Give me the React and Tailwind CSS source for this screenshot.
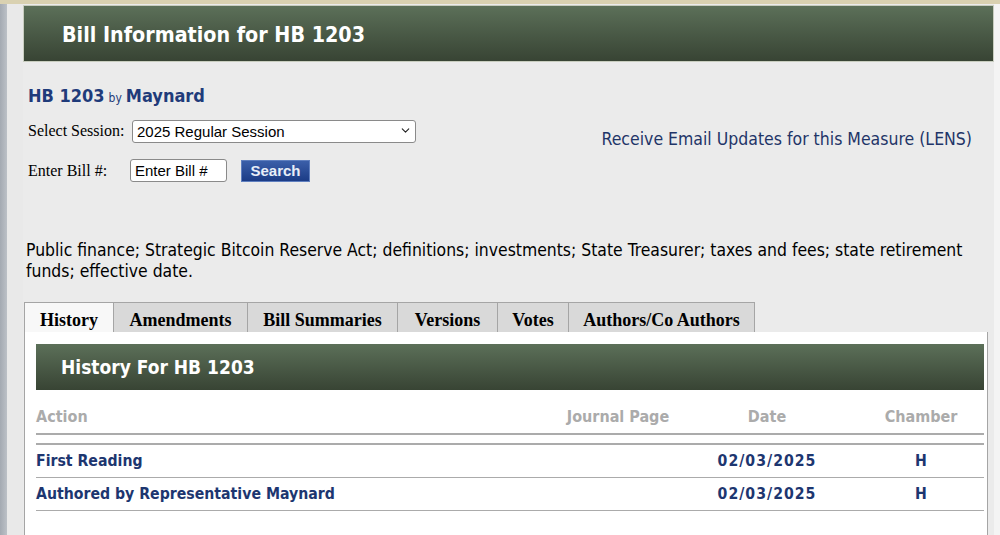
import { ChevronDown } from "lucide-react";

const tah = { fontFamily: '"DejaVu Sans Condensed", "DejaVu Sans", sans-serif' };

const tabs = ["History", "Amendments", "Bill Summaries", "Versions", "Votes", "Authors/Co Authors"];
const tabWidths = ["w-[89px]", "w-[134px]", "w-[150px]", "w-[100px]", "w-[71px]", "w-[187px]"];

const rows = [
  { action: "First Reading", page: "", date: "02/03/2025", chamber: "H" },
  { action: "Authored by Representative Maynard", page: "", date: "02/03/2025", chamber: "H" },
];

export default function App() {
  return (
    <div className="w-[1000px] h-[535px] overflow-hidden bg-[#ebebeb] flex flex-col">
      <div className="h-[4px] bg-[#d9d1b1] shrink-0" />
      <div className="flex flex-1 min-h-0">
        <div className="w-[7px] bg-gradient-to-r from-[#a4aab2] to-[#bcc1c7] shrink-0" />
        <div className="w-[16px] bg-[#e9e9e9] shrink-0" />

        <main className="w-[971px] shrink-0 flex flex-col">
          <header
            className="mt-[1px] h-[57px] flex items-center pl-[38px] pt-[2px] bg-gradient-to-b from-[#5c7059] to-[#384434] border border-[#c8cdbf]"
            style={tah}
          >
            <h1 className="text-[21.3px] font-bold text-white">Bill Information for HB 1203</h1>
          </header>

          <section className="flex justify-between pl-[5px] pr-[22px]">
            <div className="flex flex-col">
              <div className="mt-[20px] h-[22px] flex items-baseline text-[#1f3b7a] font-bold" style={tah}>
                <span className="text-[18px]">HB 1203</span>
                <span className="text-[12px] font-normal mx-[4px]">by</span>
                <span className="text-[18px]">Maynard</span>
              </div>

              <div className="mt-[15px] flex items-center h-[23px]">
                <span className="text-[16px] text-black w-[104px]" style={{ fontFamily: '"Liberation Serif", serif' }}>
                  Select Session:
                </span>
                <div className="relative">
                  <select
                    className="appearance-none w-[284px] h-[23px] bg-white border border-[#8a8a8a] rounded-[3px] pl-[4px] text-[15px] text-black"
                    style={{ fontFamily: '"Liberation Sans", Arial, sans-serif' }}
                    defaultValue="2025"
                  >
                    <option value="2025">2025 Regular Session</option>
                  </select>
                  <ChevronDown className="absolute right-[4px] top-[5px] w-[13px] h-[13px] text-[#222]" strokeWidth={2} />
                </div>
              </div>

              <div className="mt-[17px] flex items-center h-[23px]">
                <span className="text-[16px] text-black w-[102px]" style={{ fontFamily: '"Liberation Serif", serif' }}>
                  Enter Bill #:
                </span>
                <input
                  className="w-[97px] h-[23px] bg-white border border-[#8a8a8a] rounded-[3px] px-[4px] text-[15px] placeholder:text-black"
                  style={{ fontFamily: '"Liberation Sans", Arial, sans-serif' }}
                  placeholder="Enter Bill #"
                />
                <button
                  className="ml-[14px] w-[69px] h-[22px] bg-gradient-to-b from-[#3b5fa9] to-[#1c3c86] border border-[#5f7fbf] text-[#e8eef8] font-bold text-[15px] leading-none"
                  style={{ fontFamily: '"Liberation Sans", Arial, sans-serif' }}
                >
                  Search
                </button>
              </div>
            </div>

            <a className="mt-[64px] text-[17.5px] text-[#1f3568] self-start" style={tah}>
              Receive Email Updates for this Measure (LENS)
            </a>
          </section>

          <p className="mt-[58px] pl-[3px] pr-[18px] text-[17.4px] leading-[21px] text-black" style={tah}>
            Public finance; Strategic Bitcoin Reserve Act; definitions; investments; State Treasurer; taxes and fees; state retirement funds; effective date.
          </p>

          <nav className="mt-[20px] flex pl-[1px] h-[30px]" style={{ fontFamily: '"Liberation Serif", serif' }}>
            {tabs.map((t, i) => (
              <div
                key={t}
                className={
                  i === 0
                    ? `${tabWidths[i]} h-[30px] pt-[5px] flex items-center justify-center bg-[#f8f8f8] border-t border-l border-[#a5a5a5] text-[18px] font-bold text-black`
                    : `${tabWidths[i]} h-[30px] pt-[5px] flex items-center justify-center bg-[#d9d9d9] border-t border-l border-[#a5a5a5] ${i === tabs.length - 1 ? "border-r" : ""} text-[18px] font-bold text-black`
                }
              >
                {t}
              </div>
            ))}
          </nav>

          <div className="ml-[1px] w-[964px] flex-1 bg-white border-l border-r border-[#a5a5a5] pl-[11px] pr-[3px] pt-[12px]" style={tah}>
            <div className="h-[46px] flex items-center pl-[25px] bg-gradient-to-b from-[#5c7059] to-[#384434]">
              <h2 className="text-[19px] font-bold text-white">History For HB 1203</h2>
            </div>

            <div className="grid grid-cols-[508px_148px_150px_142px] items-center h-[45px] pt-[11px] border-b-2 border-[#ababab] text-[16px] font-bold text-[#ababab]">
              <span>Action</span>
              <span className="text-center">Journal Page</span>
              <span className="text-center">Date</span>
              <span className="text-center pl-[16px]">Chamber</span>
            </div>
            <div className="mt-[8px] border-t-2 border-[#ababab]" />

            {rows.map((r) => (
              <div
                key={r.action}
                className="grid grid-cols-[508px_148px_150px_142px] items-center h-[33px] border-b border-[#ababab] text-[15.7px] font-bold text-[#1d3670]"
              >
                <span>{r.action}</span>
                <span className="text-center">{r.page}</span>
                <span className="text-center tracking-[1px]">{r.date}</span>
                <span className="text-center pl-[16px]">{r.chamber}</span>
              </div>
            ))}
          </div>
        </main>

        <div className="flex-1 bg-[#f4f4f4]" />
      </div>
    </div>
  );
}
